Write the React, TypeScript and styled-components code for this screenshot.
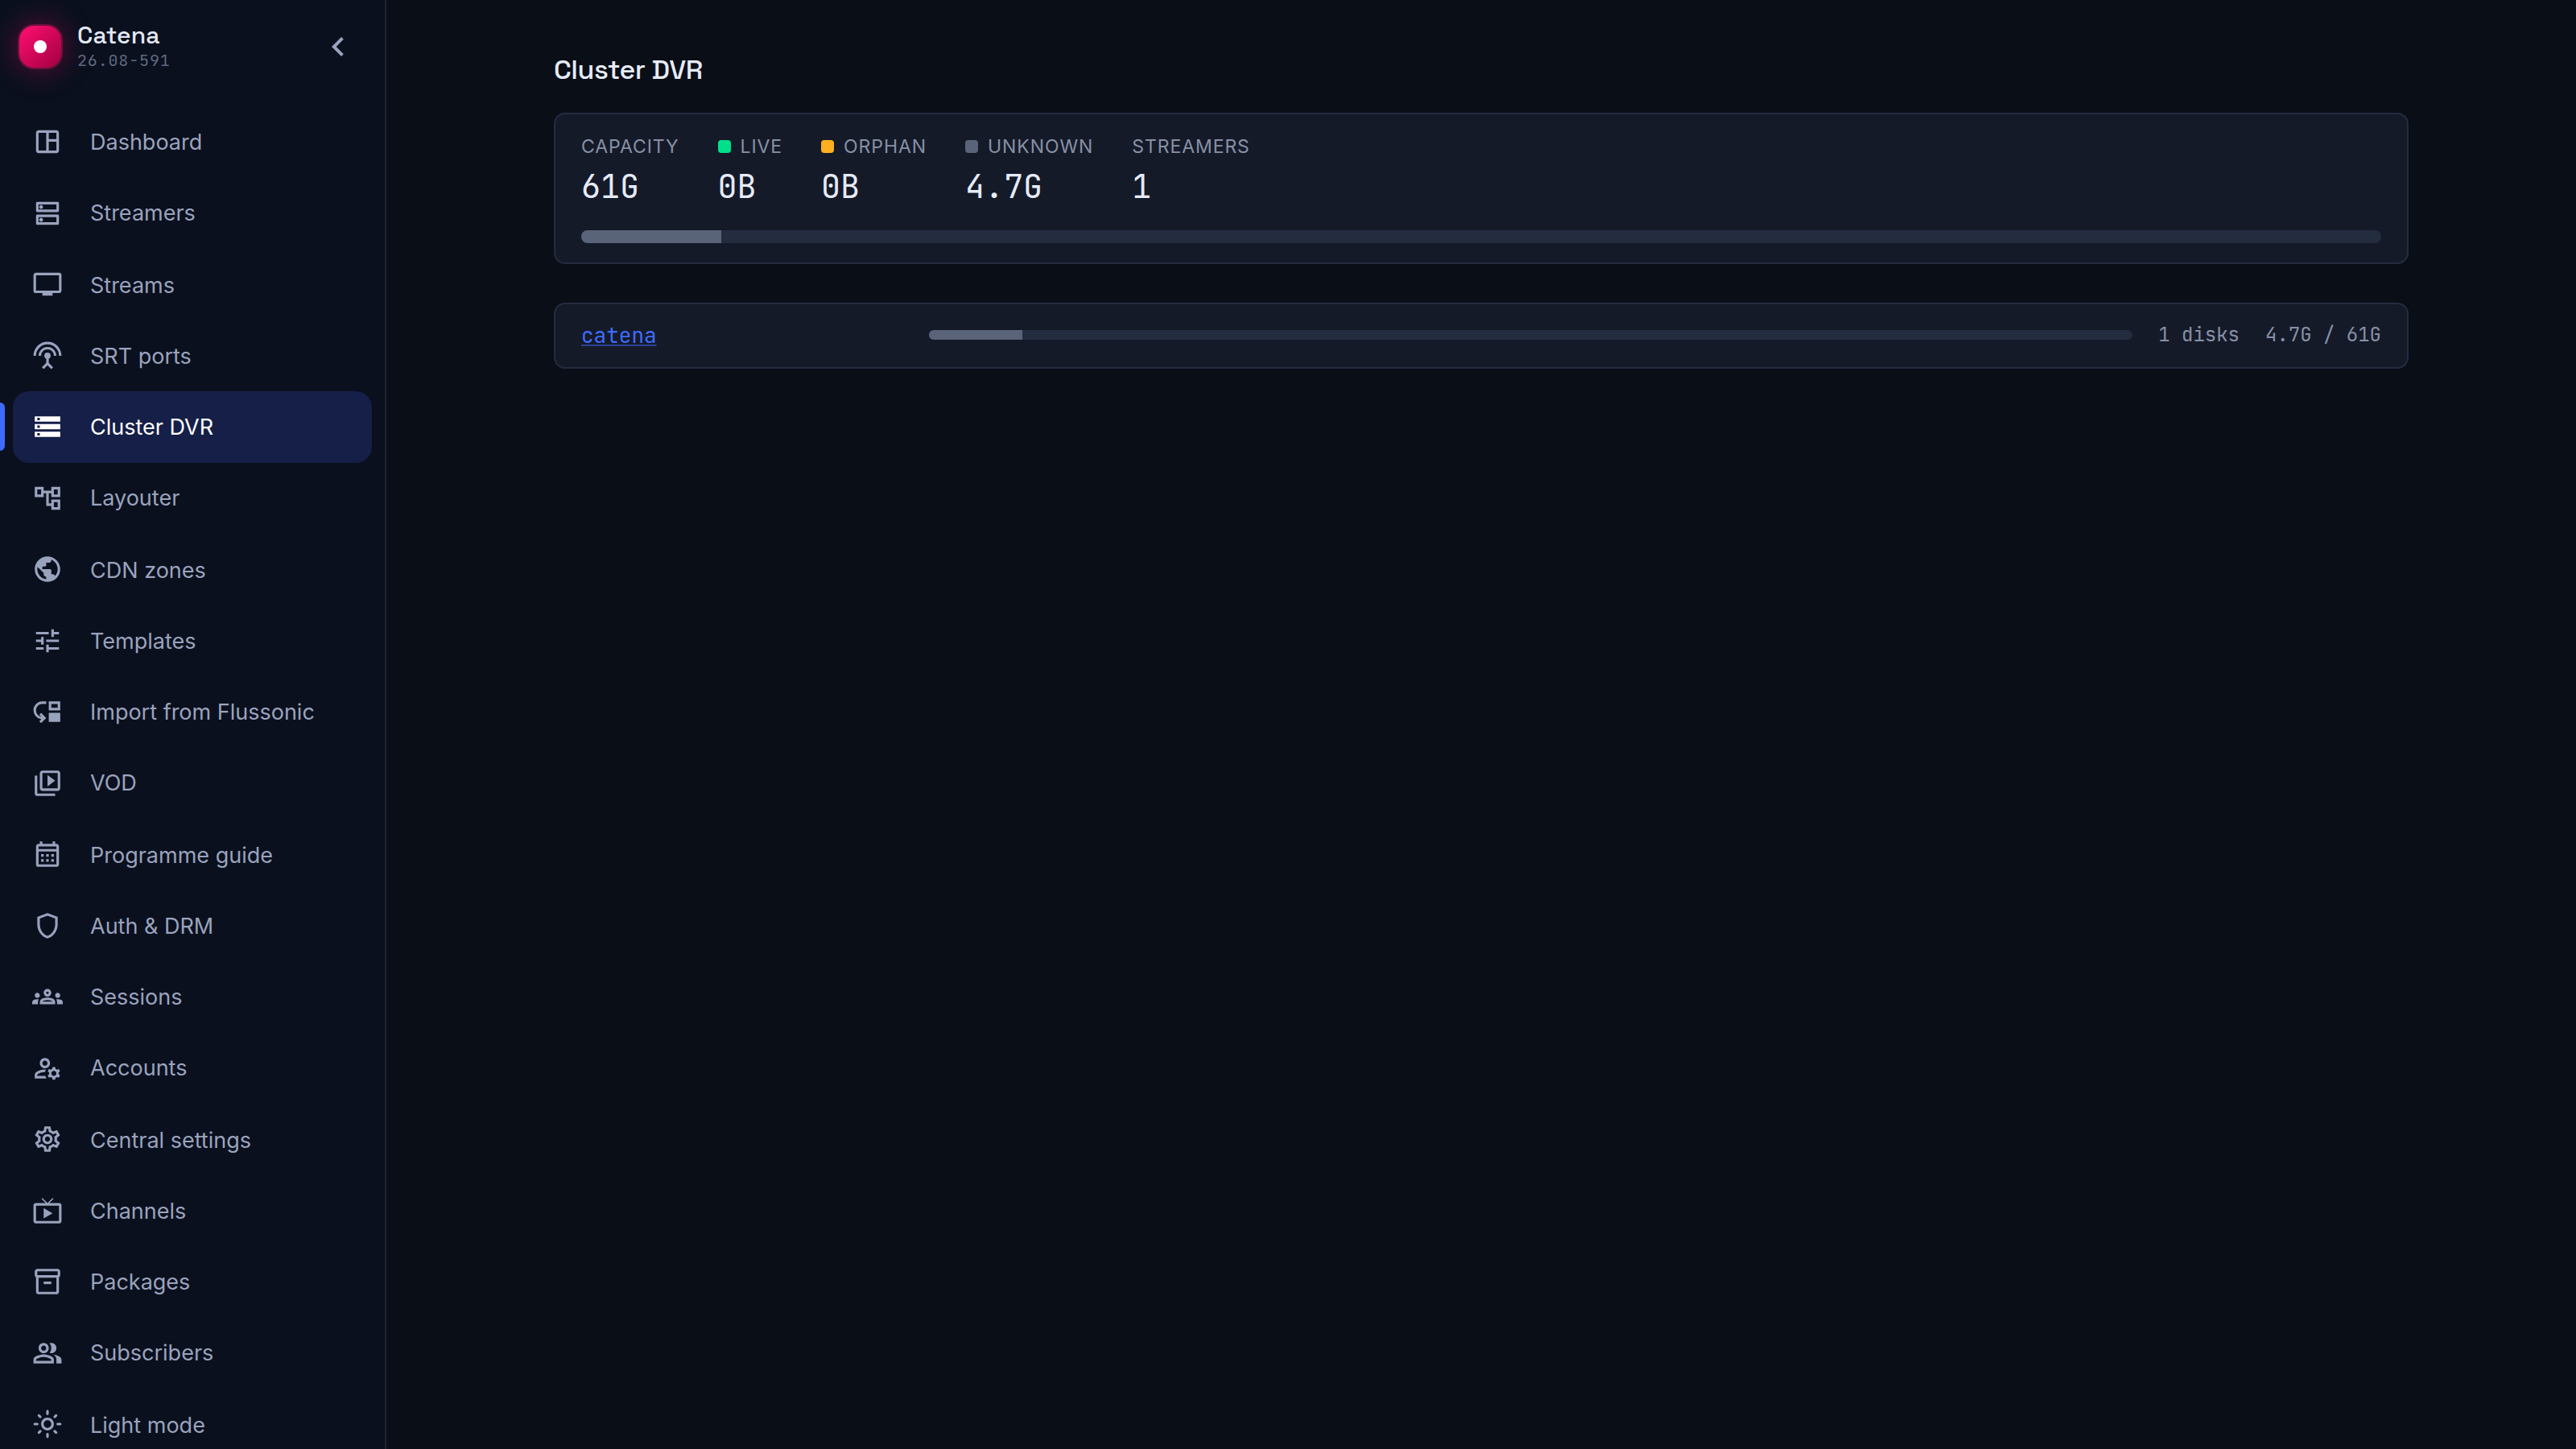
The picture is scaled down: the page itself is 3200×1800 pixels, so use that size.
import React from "react";
import styled, { createGlobalStyle } from "styled-components";
import type { IconType } from "react-icons";
import {
  MdOutlineSpaceDashboard,
  MdOutlineDns,
  MdPersonalVideo,
  MdSettingsInputAntenna,
  MdStorage,
  MdOutlineAccountTree,
  MdPublic,
  MdTune,
  MdOutlineMoveDown,
  MdOutlineVideoLibrary,
  MdOutlineCalendarMonth,
  MdOutlineShield,
  MdOutlineGroups,
  MdOutlineManageAccounts,
  MdOutlineSettings,
  MdLiveTv,
  MdOutlineInventory2,
  MdOutlinePeopleAlt,
  MdOutlineLightMode,
  MdChevronLeft,
} from "react-icons/md";

const sans = `Inter, "Liberation Sans", sans-serif`;
const display = `"Space Grotesk", Inter, "Liberation Sans", sans-serif`;
const mono = `"JetBrains Mono", "DejaVu Sans Mono", "Liberation Mono", monospace`;

const GlobalStyle = createGlobalStyle`
  *, *::before, *::after { box-sizing: border-box; }
  body { margin: 0; background: #0a0e17; font-family: ${sans}; overflow: hidden; }
`;

const Shell = styled.div`
  display: flex;
  height: 100vh;
  overflow: hidden;
`;

const Sidebar = styled.aside`
  width: 480px;
  flex: none;
  overflow: hidden;
  background: #0a101e;
  border-right: 2px solid #1e2232;
`;

const Brand = styled.header`
  display: flex;
  align-items: center;
  height: 116px;
  padding: 0 34px 0 22px;
`;

const Logo = styled.div`
  display: grid;
  place-items: center;
  width: 56px;
  height: 56px;
  flex: none;
  border-radius: 20px;
  border: 2px solid rgba(255, 20, 110, 0.4);
  background: linear-gradient(135deg, #ff0f73, #a3003f) padding-box;
  box-shadow: 0 0 36px rgba(255, 10, 110, 0.35);

  &::after {
    content: "";
    width: 16px;
    height: 16px;
    border-radius: 50%;
    background: #fff;
  }
`;

const BrandText = styled.div`
  flex: 1;
  margin: -2px 0 0 18px;
`;

const BrandName = styled.div`
  font: 500 30px/33px ${display};
  letter-spacing: 0.1px;
  color: #e3e8f5;
`;

const Version = styled.div`
  font: 400 20px/24px ${mono};
  letter-spacing: 0.84px;
  margin-top: 3px;
  color: #5f6880;
`;

const Collapse = styled.button`
  display: flex;
  padding: 0;
  border: 0;
  background: none;
  font-size: 48px;
  color: #9aa3bd;
`;

const Nav = styled.nav`
  padding: 16px 16px 0;
`;

const NavLabel = styled.span`
  padding-top: 2px;
  line-height: 40px;
`;

const NavItem = styled.a<{ $active?: boolean }>`
  position: relative;
  display: flex;
  align-items: center;
  gap: 34px;
  height: 88.5px;
  padding-left: 24px;
  border-radius: 20px;
  background: ${(p) => (p.$active ? "#151f47" : "transparent")};
  color: ${(p) => (p.$active ? "#ffffff" : "#9aa3bd")};
  font-size: 27px;

  &:nth-child(4n + 2) ${NavLabel} {
    padding-top: 0;
  }

  &:nth-child(4n + 3) ${NavLabel} {
    padding-top: 4px;
  }

  svg {
    width: 38px;
    height: 38px;
    flex: none;
  }

  &::before {
    content: "";
    display: ${(p) => (p.$active ? "block" : "none")};
    position: absolute;
    left: -16px;
    top: 14px;
    width: 6px;
    height: 60px;
    border-radius: 0 6px 6px 0;
    background: #3d6bff;
  }
`;

const Main = styled.main`
  flex: 1;
  background: #0a0e17;
`;

const Content = styled.div`
  max-width: 2400px;
  margin: 0 auto;
  padding: 65px 48px 64px;
`;

const PageTitle = styled.h1`
  margin: 0 0 31px;
  font: 500 34px/44px ${display};
  letter-spacing: -0.5px;
  color: #e6ebf7;
`;

const Card = styled.section`
  border: 2px solid #242c40;
  border-radius: 14px;
  background: #151a29;
`;

const SummaryCard = styled(Card)`
  height: 188px;
  padding: 22px 32px 0;
`;

const Stats = styled.div`
  display: flex;
  gap: 48px;
`;

const StatLabel = styled.div`
  display: flex;
  align-items: center;
  gap: 12px;
  height: 36px;
  font-size: 23px;
  letter-spacing: 0.92px;
  text-transform: uppercase;
  color: #8791a5;
`;

const Swatch = styled.span<{ $color: string }>`
  width: 16px;
  height: 16px;
  border-radius: 4px;
  background: ${(p) => p.$color};
`;

const StatValue = styled.div`
  padding-top: 2px;
  font: 400 40px/60px ${mono};
  color: #e6ebf7;
`;

const Track = styled.div<{ $size: number }>`
  flex: 1;
  height: ${(p) => p.$size}px;
  border-radius: ${(p) => p.$size / 2}px;
  overflow: hidden;
  background: #242c40;
`;

const Fill = styled.div`
  height: 100%;
  background: #5a6478;
`;

const SummaryTrack = styled.div`
  display: flex;
  margin-top: 24px;
`;

const NodeCard = styled(Card)`
  display: flex;
  align-items: center;
  gap: 32px;
  height: 82px;
  margin-top: 48px;
  padding: 0 32px 2px;
`;

const NodeName = styled.div`
  width: 400px;
  padding-top: 1px;
`;

const NodeLink = styled.a`
  font: 400 26px/40px ${mono};
  color: #3d6bff;
  text-decoration: underline;
  text-decoration-color: rgba(61, 107, 255, 0.5);
  text-decoration-thickness: 2px;
  text-underline-offset: 2px;
`;

const NodeMeta = styled.span`
  margin-top: -1px;
  font: 400 24px/36px ${mono};
  color: #8791a5;
  white-space: pre;
`;

const navItems: { label: string; icon: IconType }[] = [
  { label: "Dashboard", icon: MdOutlineSpaceDashboard },
  { label: "Streamers", icon: MdOutlineDns },
  { label: "Streams", icon: MdPersonalVideo },
  { label: "SRT ports", icon: MdSettingsInputAntenna },
  { label: "Cluster DVR", icon: MdStorage },
  { label: "Layouter", icon: MdOutlineAccountTree },
  { label: "CDN zones", icon: MdPublic },
  { label: "Templates", icon: MdTune },
  { label: "Import from Flussonic", icon: MdOutlineMoveDown },
  { label: "VOD", icon: MdOutlineVideoLibrary },
  { label: "Programme guide", icon: MdOutlineCalendarMonth },
  { label: "Auth & DRM", icon: MdOutlineShield },
  { label: "Sessions", icon: MdOutlineGroups },
  { label: "Accounts", icon: MdOutlineManageAccounts },
  { label: "Central settings", icon: MdOutlineSettings },
  { label: "Channels", icon: MdLiveTv },
  { label: "Packages", icon: MdOutlineInventory2 },
  { label: "Subscribers", icon: MdOutlinePeopleAlt },
  { label: "Light mode", icon: MdOutlineLightMode },
];

const stats: { label: string; value: string; color?: string }[] = [
  { label: "Capacity", value: "61G" },
  { label: "Live", value: "0B", color: "#00e08a" },
  { label: "Orphan", value: "0B", color: "#ffb020" },
  { label: "Unknown", value: "4.7G", color: "#5a6478" },
  { label: "Streamers", value: "1" },
];

const usedPercent = 7.77;

function UsageBar({ size }: { size: number }) {
  return (
    <Track $size={size}>
      <Fill style={{ width: `${usedPercent}%` }} />
    </Track>
  );
}

export default function App() {
  return (
    <Shell>
      <GlobalStyle />
      <Sidebar>
        <Brand>
          <Logo />
          <BrandText>
            <BrandName>Catena</BrandName>
            <Version>26.08-591</Version>
          </BrandText>
          <Collapse aria-label="Collapse sidebar">
            <MdChevronLeft />
          </Collapse>
        </Brand>
        <Nav>
          {navItems.map(({ label, icon: Icon }) => (
            <NavItem key={label} $active={label === "Cluster DVR"}>
              <Icon />
              <NavLabel>{label}</NavLabel>
            </NavItem>
          ))}
        </Nav>
      </Sidebar>
      <Main>
        <Content>
          <PageTitle>Cluster DVR</PageTitle>
          <SummaryCard>
            <Stats>
              {stats.map((s) => (
                <div key={s.label}>
                  <StatLabel>
                    {s.color && <Swatch $color={s.color} />}
                    {s.label}
                  </StatLabel>
                  <StatValue>{s.value}</StatValue>
                </div>
              ))}
            </Stats>
            <SummaryTrack>
              <UsageBar size={16} />
            </SummaryTrack>
          </SummaryCard>
          <NodeCard>
            <NodeName>
              <NodeLink>catena</NodeLink>
            </NodeName>
            <UsageBar size={12} />
            <NodeMeta>1 disks</NodeMeta>
            <NodeMeta>4.7G / 61G</NodeMeta>
          </NodeCard>
        </Content>
      </Main>
    </Shell>
  );
}
